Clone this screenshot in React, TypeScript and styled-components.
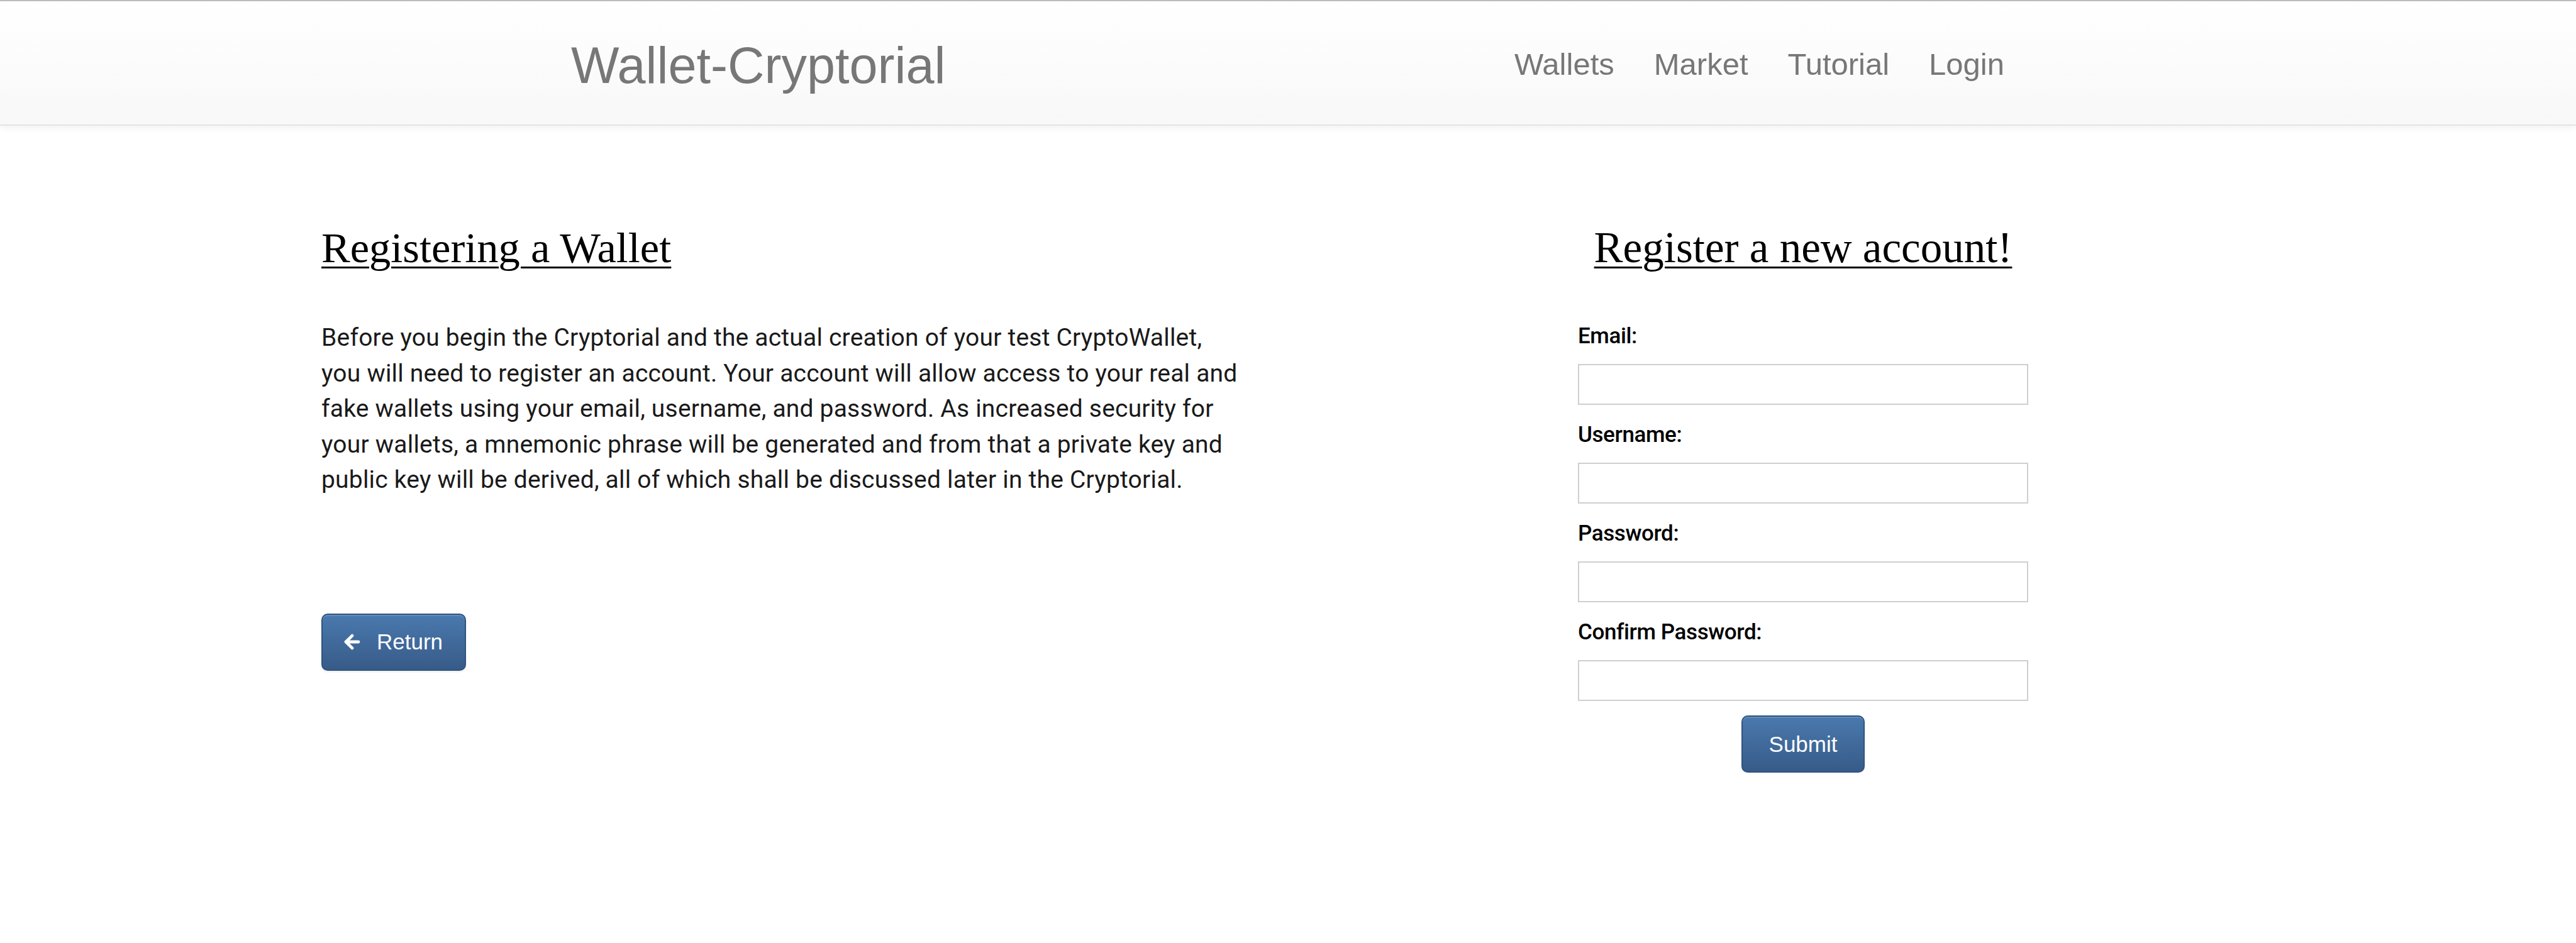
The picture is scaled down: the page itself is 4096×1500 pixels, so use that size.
import styled, { createGlobalStyle } from 'styled-components'
import { ArrowLeft } from 'lucide-react'

const GlobalStyle = createGlobalStyle`
  html, body {
    margin: 0;
    padding: 0;
    background: #fff;
  }
  * {
    box-sizing: border-box;
  }
`

const Navbar = styled.nav`
  height: 200px;
  background: linear-gradient(to bottom, #ffffff 0%, #f8f8f8 100%);
  border-top: 2px solid #bcbcbc;
  border-bottom: 2px solid #e4e4e4;
  box-shadow: 0 3px 12px rgba(0, 0, 0, 0.06);
`

const NavInner = styled.div`
  width: 2340px;
  height: 100%;
  margin: 0 auto;
  padding: 0 31px 0 30px;
  display: flex;
  align-items: center;
  justify-content: space-between;
`

const Brand = styled.a`
  font-family: 'Liberation Sans', Arial, sans-serif;
  font-size: 81px;
  line-height: 1;
  color: #777;
  text-decoration: none;
  padding-top: 8px;
`

const NavLinks = styled.ul`
  display: flex;
  gap: 63px;
  margin: 0;
  padding: 4px 0 0;
  list-style: none;
`

const NavLink = styled.a`
  font-family: 'Liberation Sans', Arial, sans-serif;
  font-size: 49px;
  line-height: 1;
  color: #777;
  text-decoration: none;
`

const Main = styled.main`
  display: grid;
  grid-template-columns: 1460px 716px;
  column-gap: 538px;
  padding: 157px 0 0 511px;
`

const Heading = styled.h1<{ $center?: boolean }>`
  margin: 0;
  font-family: 'Liberation Serif', 'Times New Roman', serif;
  font-size: ${({ $center }) => ($center ? '69px' : '68.5px')};
  font-weight: 400;
  line-height: 75px;
  color: #000;
  text-decoration: underline;
  text-decoration-thickness: 3px;
  text-underline-offset: 7px;
  text-align: ${({ $center }) => ($center ? 'center' : 'left')};
  white-space: nowrap;
`

const Intro = styled.p`
  margin: 77px 0 0;
  font-family: Roboto, 'Noto Sans', sans-serif;
  font-size: 39px;
  line-height: 56.5px;
  letter-spacing: 0.2px;
  color: #1a1a1a;
`

const Button = styled.button<{ $icon?: boolean }>`
  display: inline-flex;
  align-items: center;
  justify-content: center;
  gap: 22px;
  height: 91px;
  padding: ${({ $icon }) => ($icon ? '0 35px 0 30px' : '0 42px')};
  border: 2px solid #2f5481;
  border-radius: 10px;
  background: linear-gradient(to bottom, #4a79ae 0%, #375b88 100%);
  box-shadow: inset 0 2px 0 rgba(255, 255, 255, 0.15), 0 2px 3px rgba(0, 0, 0, 0.08);
  color: #fff;
  font-family: 'Liberation Sans', Arial, sans-serif;
  font-size: 35px;
  cursor: pointer;

  svg {
    flex-shrink: 0;
  }
`

const ReturnButton = styled(Button)`
  margin-top: 184px;
`

const Form = styled.form`
  display: flex;
  flex-direction: column;
  margin-top: 83px;
`

const Field = styled.div`
  display: flex;
  flex-direction: column;
  gap: 24px;
  margin-bottom: 28px;

  &:last-of-type {
    margin-bottom: 23px;
  }
`

const Label = styled.label`
  font-family: Roboto, 'Noto Sans', sans-serif;
  font-size: 35px;
  font-weight: 500;
  line-height: 40px;
  letter-spacing: -0.4px;
  color: #000;
`

const Input = styled.input`
  width: 716px;
  height: 65px;
  border: 2px solid #cfcfcf;
  border-radius: 0;
  padding: 0 14px;
  font-size: 30px;
  outline: none;
`

const SubmitButton = styled(Button)`
  align-self: center;
`

const fields = ['Email', 'Username', 'Password', 'Confirm Password']

export default function App() {
  return (
    <>
      <GlobalStyle />
      <Navbar>
        <NavInner>
          <Brand href="#">Wallet-Cryptorial</Brand>
          <NavLinks>
            <li><NavLink href="#">Wallets</NavLink></li>
            <li><NavLink href="#">Market</NavLink></li>
            <li><NavLink href="#">Tutorial</NavLink></li>
            <li><NavLink href="#">Login</NavLink></li>
          </NavLinks>
        </NavInner>
      </Navbar>

      <Main>
        <section>
          <Heading>Registering a Wallet</Heading>
          <Intro>
            Before you begin the Cryptorial and the actual creation of your test CryptoWallet,
            you will need to register an account. Your account will allow access to your real and
            fake wallets using your email, username, and password. As increased security for
            your wallets, a mnemonic phrase will be generated and from that a private key and
            public key will be derived, all of which shall be discussed later in the Cryptorial.
          </Intro>
          <ReturnButton type="button" $icon>
            <ArrowLeft size={34} strokeWidth={3.4} />
            Return
          </ReturnButton>
        </section>

        <section>
          <Heading $center>Register a new account!</Heading>
          <Form onSubmit={(e) => e.preventDefault()}>
            {fields.map((name) => (
              <Field key={name}>
                <Label>{name}:</Label>
                <Input type={name.includes('Password') ? 'password' : 'text'} />
              </Field>
            ))}
            <SubmitButton type="submit">Submit</SubmitButton>
          </Form>
        </section>
      </Main>
    </>
  )
}
